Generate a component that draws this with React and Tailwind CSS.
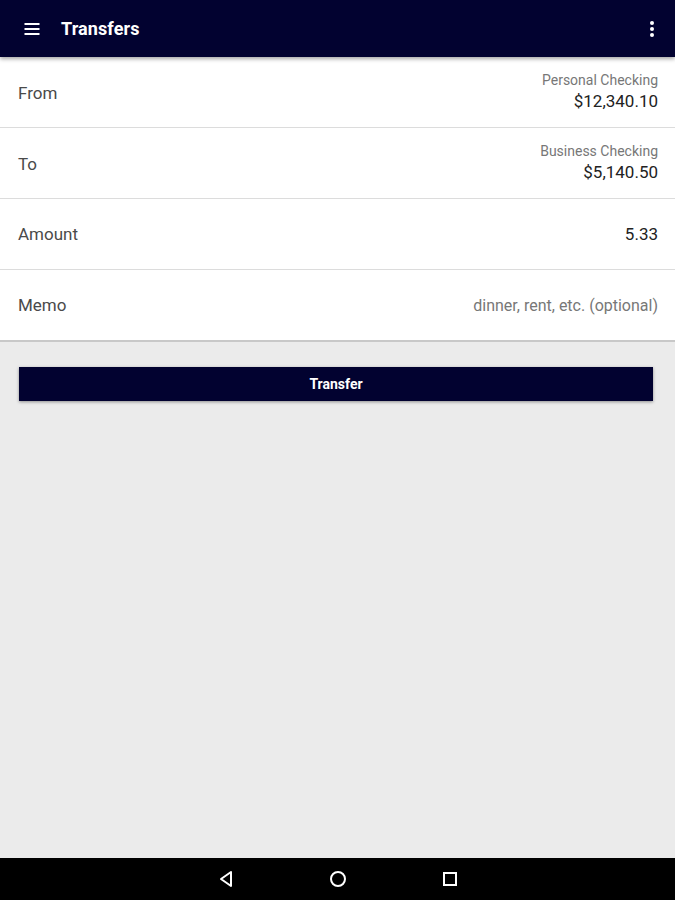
export default function App() {
  const font = { fontFamily: 'Roboto, "Liberation Sans", sans-serif' };
  return (
    <div className="w-[675px] h-[900px] flex flex-col bg-[#ebebeb]" style={font}>
      <div className="h-[57px] bg-[#020230] flex items-center px-[22px] shadow-[0_2px_4px_rgba(0,0,0,0.35)] relative z-10">
        <svg width="20" height="20" viewBox="0 0 24 24" className="text-white">
          <path d="M3 6h18M3 12h18M3 18h18" stroke="currentColor" strokeWidth="2.6" />
        </svg>
        <div className="ml-[19px] text-white font-bold text-[18px] tracking-[0.1px]">Transfers</div>
        <div className="flex-1" />
        <svg width="6" height="18" viewBox="0 0 6 18" className="mr-[-2px]">
          <circle cx="3" cy="3" r="2" fill="white" />
          <circle cx="3" cy="9" r="2" fill="white" />
          <circle cx="3" cy="15" r="2" fill="white" />
        </svg>
      </div>
      <div className="bg-white flex flex-col border-b-2 border-[#c8c8c8]">
        <div className="h-[71px] flex items-center justify-between pl-[18px] pr-[17px] border-b border-[#dcdcdc]">
          <span className="text-[17px] text-[#4a4a4a] mt-[3px]">From</span>
          <div className="flex flex-col items-end">
            <span className="text-[14px] text-[#777] leading-[18px]">Personal Checking</span>
            <span className="text-[17px] text-[#222] leading-[24px]">$12,340.10</span>
          </div>
        </div>
        <div className="h-[71px] flex items-center justify-between pl-[18px] pr-[17px] border-b border-[#dcdcdc]">
          <span className="text-[17px] text-[#4a4a4a] mt-[3px]">To</span>
          <div className="flex flex-col items-end">
            <span className="text-[14px] text-[#777] leading-[18px]">Business Checking</span>
            <span className="text-[17px] text-[#222] leading-[24px]">$5,140.50</span>
          </div>
        </div>
        <div className="h-[71px] flex items-center justify-between pl-[18px] pr-[17px] border-b border-[#dcdcdc]">
          <span className="text-[17px] text-[#4a4a4a] mt-[2px]">Amount</span>
          <span className="text-[17px] text-[#222] mt-[2px]">5.33</span>
        </div>
        <div className="h-[70px] flex items-center justify-between pl-[18px] pr-[17px]">
          <span className="text-[17px] text-[#4a4a4a] mt-[2px]">Memo</span>
          <span className="text-[16px] text-[#777] mt-[2px]">dinner, rent, etc. (optional)</span>
        </div>
      </div>
      <div className="pl-[19px] pr-[22px] pt-[25px]">
        <button className="w-full h-[34px] bg-[#020230] text-white font-bold text-[14px] shadow-[0_1px_3px_rgba(0,0,0,0.4)]">
          Transfer
        </button>
      </div>
      <div className="flex-1" />
      <div className="h-[42px] bg-black flex items-center justify-center gap-[92px]">
        <svg width="20" height="20" viewBox="0 0 20 20">
          <path d="M15 3 L5 10 L15 17 Z" fill="none" stroke="white" strokeWidth="2" strokeLinejoin="round" />
        </svg>
        <svg width="20" height="20" viewBox="0 0 20 20">
          <circle cx="10" cy="10" r="7" fill="none" stroke="white" strokeWidth="2" />
        </svg>
        <svg width="20" height="20" viewBox="0 0 20 20">
          <rect x="4" y="4" width="12" height="12" fill="none" stroke="white" strokeWidth="2" />
        </svg>
      </div>
    </div>
  );
}
